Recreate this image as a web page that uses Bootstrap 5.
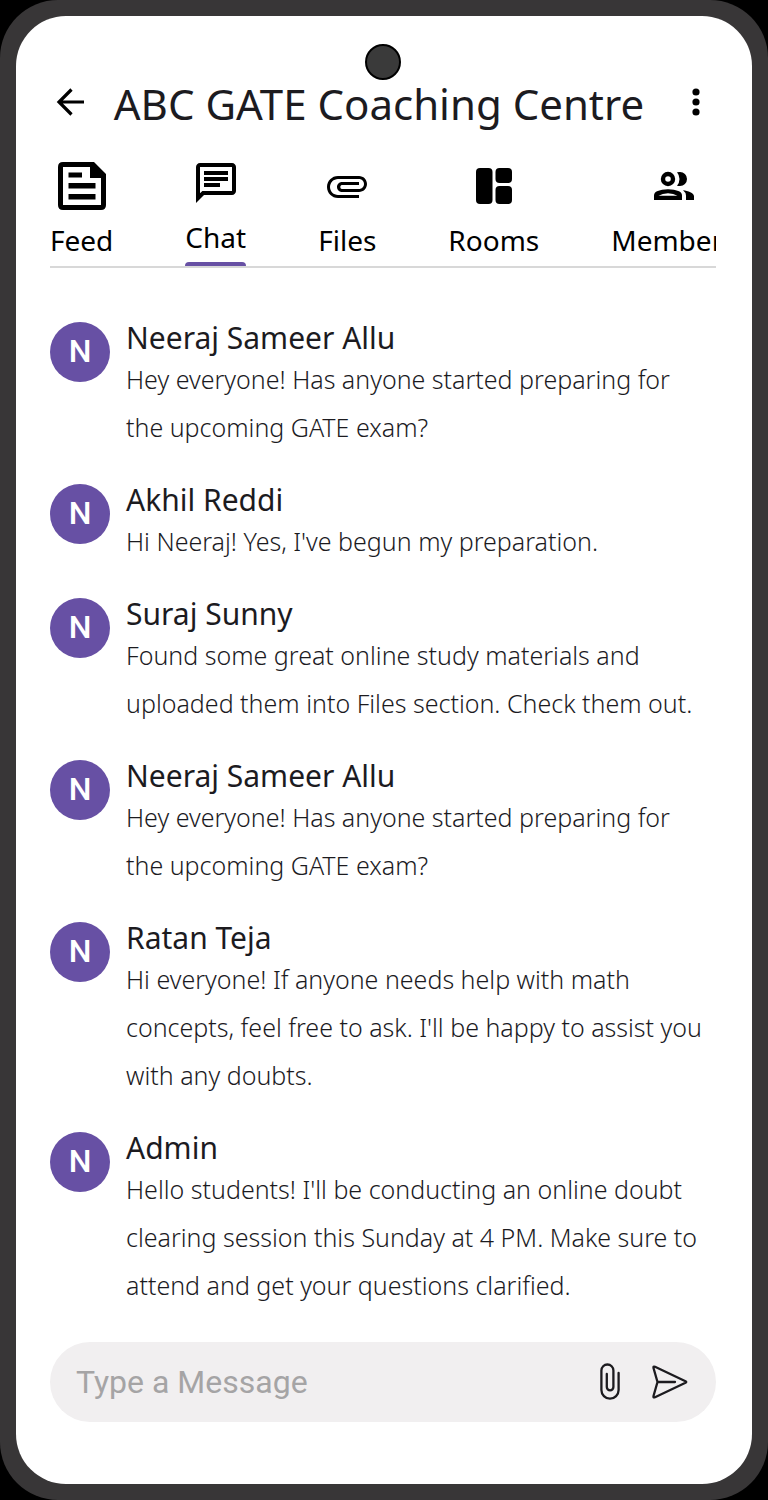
<!DOCTYPE html>
<html lang="en">
<head>
<meta charset="utf-8">
<meta name="viewport" content="width=device-width, initial-scale=1">
<title>ABC GATE Coaching Centre</title>
<link href="https://cdn.jsdelivr.net/npm/bootstrap@5.3.0/dist/css/bootstrap.min.css" rel="stylesheet">
<style>
  body { background: #000; color: #1c1b1f; font-family: "Noto Sans", sans-serif; }
  .phone { background: #383637; border-radius: 58px; padding: 16px; }
  .screen { border-radius: 50px; padding: 28px 36px 62px 34px; }
  .camera { width: 36px; height: 36px; background: #3a3a3a; border: 2px solid #000; }
  svg { display: block; flex: none; }
  .plain { background: none; border: 0; padding: 0; color: #000; }
  .title { font-size: 42px; line-height: 46px; font-weight: 400; padding-right: 8px; }
  .tabs { margin-top: 23px; gap: 72px; border-bottom: 2px solid #d8d8d8; }
  .tab { display: flex; flex-direction: column; align-items: center; flex: none; padding-bottom: 10px; font-size: 28px; line-height: 32px; color: #000; text-decoration: none; }
  .tab-icon { height: 64px; margin-bottom: 6px; display: flex; align-items: center; }
  .tab.current { padding-bottom: 0; }
  .tab.current::after { content: ""; align-self: stretch; height: 4px; margin-top: 9px; background: #6750a4; border-radius: 4px 4px 0 0; }
  .messages { margin-top: 54px; gap: 33px; }
  .avatar { width: 60px; height: 60px; background: #6750a4; color: #fff; font: 500 32px/58px Roboto, sans-serif; text-align: center; }
  .author { font-size: 30px; line-height: 32px; font-weight: 400; padding-bottom: 1px; }
  .words { font-size: 25px; line-height: 48px; font-weight: 300; padding-right: 8px; }
  .composer { height: 80px; margin-top: 33px; padding: 0 28px 0 26px; background: #f1eff0; }
  .composer input { background: none; border: 0; outline: 0; font: 400 32px/40px Roboto, sans-serif; padding: 0; min-width: 0; }
  .composer input::placeholder { color: #a5a4a5; opacity: 1; }
</style>
</head>
<body>
<div class="phone min-vh-100 d-flex flex-column">
<main class="screen bg-white flex-grow-1 d-flex flex-column">
  <div class="camera rounded-circle mx-auto"></div>

  <header class="d-flex align-items-center">
    <button class="plain" type="button" aria-label="Back">
      <svg width="40" height="48" viewBox="0 0 40 48" fill="none" stroke="#000" stroke-width="3.200"><path d="M34 22H9M21.500 9.500L9 22l12.500 12.500"/></svg>
    </button>
    <h1 class="title flex-grow-1 text-center text-nowrap mb-0">ABC GATE Coaching Centre</h1>
    <button class="plain" type="button" aria-label="More options">
      <svg width="40" height="48" viewBox="0 0 40 48"><circle cx="20" cy="12" r="3.600"/><circle cx="20" cy="22" r="3.600"/><circle cx="20" cy="32" r="3.600"/></svg>
    </button>
  </header>

  <nav class="tabs d-flex align-items-end overflow-hidden" aria-label="Sections">
    <a class="tab" href="#feed"><span class="tab-icon">
      <svg width="48" height="48" viewBox="0 0 48 48"><path fill-rule="evenodd" d="M5 0h31l12 12v31q0 5-5 5H5q-5 0-5-5V5q0-5 5-5zM5 5v38h38V16H32V5zM10.500 10.500h13.500v5H10.500zM10.500 21h27v5.500h-27zM10.500 32h27v5.500h-27z"/></svg></span>Feed</a>
    <a class="tab current" href="#chat" aria-current="page"><span class="tab-icon">
      <svg width="48" height="48" viewBox="0 0 24 24"><path d="M4 4h16v12H5.170L4 17.170V4m0-2c-1.100 0-1.990.9-1.990 2L2 22l4-4h14c1.100 0 2-.9 2-2V4c0-1.100-.9-2-2-2H4zm2 10h8v2H6v-2zm0-3h12v2H6V9zm0-3h12v2H6V6z"/></svg></span>Chat</a>
    <a class="tab" href="#files"><span class="tab-icon">
      <svg width="48" height="48" viewBox="0 0 24 24"><path d="M2 12.500C2 9.460 4.460 7 7.500 7H18c2.210 0 4 1.790 4 4s-1.790 4-4 4H9.500C8.120 15 7 13.880 7 12.500S8.120 10 9.500 10H18v1.500H9.410c-1 0-1 2 0 2H18c1.400 0 2.500-1.100 2.500-2.500S19.400 8.500 18 8.500H7.500c-2.200 0-4 1.800-4 4s1.800 4 4 4H18V18H7.500C4.460 18 2 15.540 2 12.500z"/></svg></span>Files</a>
    <a class="tab" href="#rooms"><span class="tab-icon">
      <svg width="36" height="36" viewBox="0 0 36 36"><rect width="16.500" height="36" rx="4"/><rect x="19.500" width="16.500" height="15" rx="4"/><rect x="19.500" y="18" width="16.500" height="18" rx="4"/></svg></span>Rooms</a>
    <a class="tab" href="#members"><span class="tab-icon">
      <svg width="48" height="48" viewBox="0 0 48 48"><circle cx="18" cy="17" r="5" fill="none" stroke="#000" stroke-width="4.400"/><path d="M27 10.300Q28 10 30 10a7 7 0 0 1 0 14q-2 0-3-.3 2.500-3 2.500-6.700T27 10.300z"/><path fill-rule="evenodd" d="M4 38v-4.500q0-3 3-4.300c6-2.700 16-2.700 22 0q3 1.300 3 4.300V38zM8.500 33.800h19q-4-2.500-9.500-2.500t-9.500 2.500z"/><path d="M33 28.200c5 .7 11 2.500 11 6V38h-8v-4.500q0-3-3-5.300z"/></svg></span>Members</a>
  </nav>

  <section class="messages d-flex flex-column" aria-label="Messages">
    <article class="d-flex gap-3"><div class="avatar rounded-circle flex-shrink-0">N</div><div><h2 class="author mb-0">Neeraj Sameer Allu</h2><p class="words mb-0">Hey everyone! Has anyone started preparing for the upcoming GATE exam?</p></div></article>
    <article class="d-flex gap-3"><div class="avatar rounded-circle flex-shrink-0">N</div><div><h2 class="author mb-0">Akhil Reddi</h2><p class="words mb-0">Hi Neeraj! Yes, I've begun my preparation.</p></div></article>
    <article class="d-flex gap-3"><div class="avatar rounded-circle flex-shrink-0">N</div><div><h2 class="author mb-0">Suraj Sunny</h2><p class="words mb-0">Found some great online study materials and uploaded them into Files section. Check them out.</p></div></article>
    <article class="d-flex gap-3"><div class="avatar rounded-circle flex-shrink-0">N</div><div><h2 class="author mb-0">Neeraj Sameer Allu</h2><p class="words mb-0">Hey everyone! Has anyone started preparing for the upcoming GATE exam?</p></div></article>
    <article class="d-flex gap-3"><div class="avatar rounded-circle flex-shrink-0">N</div><div><h2 class="author mb-0">Ratan Teja</h2><p class="words mb-0">Hi everyone! If anyone needs help with math concepts, feel free to ask. I'll be happy to assist you with any doubts.</p></div></article>
    <article class="d-flex gap-3"><div class="avatar rounded-circle flex-shrink-0">N</div><div><h2 class="author mb-0">Admin</h2><p class="words mb-0">Hello students! I'll be conducting an online doubt clearing session this Sunday at 4 PM. Make sure to attend and get your questions clarified.</p></div></article>
  </section>

  <form class="composer rounded-pill d-flex align-items-center">
    <input class="flex-grow-1" type="text" placeholder="Type a Message" aria-label="Type a Message">
    <button class="plain" type="button" aria-label="Attach a file">
      <svg width="20" height="38" viewBox="0 0 20 38" fill="none" stroke="#1c1b1f" stroke-width="2.300" stroke-linecap="round"><path d="M6.800 11v13a3.300 3.300 0 0 0 6.600 0V7.500a6 6 0 0 0-12 0V27a8.600 8.600 0 0 0 17.200 0V10"/></svg>
    </button>
    <button class="plain ms-4" type="submit" aria-label="Send">
      <svg width="44" height="36" viewBox="0 0 44 36" fill="none" stroke="#1c1b1f" stroke-width="2.300" stroke-linecap="round" stroke-linejoin="round"><path d="M11 2.800Q9 2 9.500 4L13.500 18 9.500 32Q9 34 11 33.200L41.500 18.800Q43 18 41.500 17.200zM13.500 18H31"/></svg>
    </button>
  </form>
</main>
</div>
<script src="https://cdn.jsdelivr.net/npm/bootstrap@5.3.0/dist/js/bootstrap.bundle.min.js"></script>
</body>
</html>
